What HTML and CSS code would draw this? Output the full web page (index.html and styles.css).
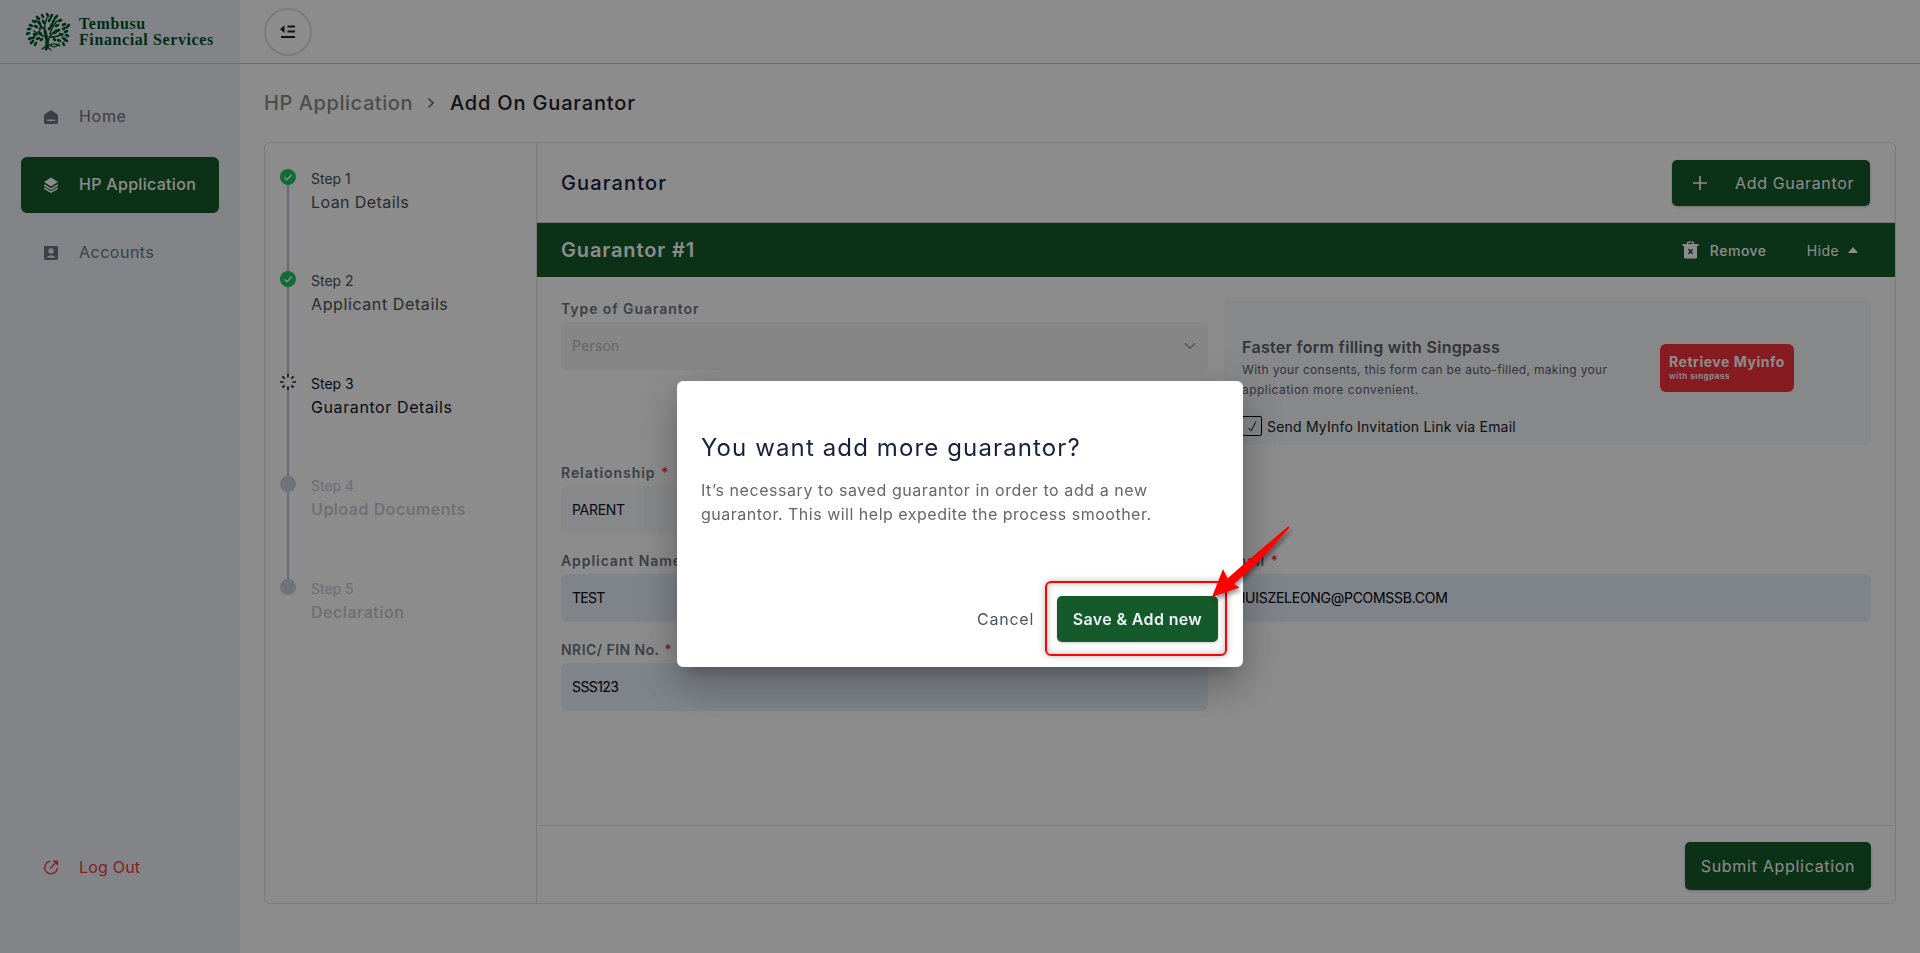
FILE: index.html
```html
<!DOCTYPE html>
<html lang="en">
<head>
<meta charset="utf-8">
<title>Add On Guarantor</title>
<link rel="stylesheet" href="styles.css">
</head>
<body>
<div class="app">
  <aside class="sidebar">
    <div class="brand">
      <svg class="brand-tree" viewBox="0 0 46 39" width="46" height="39">
        <g stroke="#00552a" fill="none" stroke-linecap="round">
          <path stroke-width="3" d="M21 37C23 31 22 26 20 19"/>
          <path stroke-width="1.500" d="M23 36C22 28 24 24 31 18M21 25C17 23 12 22 9 19M20 20C19 14 20 10 22 6M24 25C29 25 33 25 38 22M20 18C16 14 13 11 11 8M25 22C27 15 29 12 32 9"/>
          <path stroke-width="1.200" d="M17 37l4-3 5 4M24 34c4-3 7-3 11 0M23 31c4 5 7 5 11 1"/>
        </g>
        <g fill="none" stroke="#00552a" stroke-width="2.600" stroke-linecap="round">
          <path d="M22 2l1 2M17 3l1 2M27 3l-1 2M12 5l2 2M32 4l-2 2M36 8l-2 1M8 9l2 1M5 13l2 1M3 17h2M2 22l2-1M4 27l2-1M6 31l2-2M10 33l1-2M40 12l-2 1M44 13l-2 2M38 17l2-1M42 19l-2 1M43 24l-2-1M38 26l2 1M42 29l-2-1M39 33l-1-2M10 14l2 1M14 10l1 2M18 9l1 2M24 9l1-2M29 8l-1 2M33 13l-2 1M26 14l1-2M15 17l1-2M9 22l2 1M12 27l2-1M8 26l1-1M32 19l2-1M35 22l2 1M29 21l2-1M33 28l2 1M16 22l-2-2M24 17l1-1M16 28l1-1M29 27l1 1"/>
        </g>
      </svg>
      <div class="brand-name"><span class="b1">Tembusu</span><span class="b2">Financial Services</span></div>
    </div>
    <nav class="nav">
      <a class="nav-item"><svg width="16" height="16" viewBox="0 0 16 16"><path fill="currentColor" fill-rule="evenodd" d="M8 1l6.200 4.300q.8.6.8 1.500V14q0 1-1 1H2q-1 0-1-1V6.800q0-.9.8-1.500zM4 10.500h8v1.500H4z"/></svg><span class="t-home">Home</span></a>
      <a class="nav-item active"><svg width="16" height="16" viewBox="0 0 16 16"><path fill="currentColor" d="M8 .5l7 4.500-7 4.500L1 5z"/><path fill="none" stroke="currentColor" stroke-width="1.500" d="M1.200 8L8 12.200 14.800 8M1.200 11L8 15.200 14.800 11"/></svg><span class="t-hp">HP Application</span></a>
      <a class="nav-item"><svg width="16" height="16" viewBox="0 0 16 16"><path fill="currentColor" fill-rule="evenodd" d="M2.200 1h11.600Q15 1 15 2.200v11.600q0 1.200-1.200 1.200H2.200Q1 15 1 13.800V2.200Q1 1 2.200 1zM8 3.300a2.700 2.700 0 1 0 0 5.400 2.700 2.700 0 0 0 0-5.400zM3.500 12.800h9Q11 10.200 8 10.200T3.500 12.800z"/></svg><span class="t-acc">Accounts</span></a>
    </nav>
    <a class="nav-item logout"><svg width="17" height="17" viewBox="0 0 17 17"><path fill="none" stroke="currentColor" stroke-width="1.500" d="M8 1.800A6.700 6.700 0 1 0 15.200 9M7.500 9.500L13 4"/><path fill="currentColor" d="M10 1h6v6z"/></svg><span class="t-out">Log Out</span></a>
  </aside>

  <div class="page">
    <header class="topbar">
      <button class="toggle"><svg width="16" height="14" viewBox="0 0 16 14"><path fill="#222" d="M0 4.200L4.500.5v7.400z"/><path stroke="#222" stroke-width="1.800" d="M7.500 1.500H15M7.500 6.500H15M1 12h14"/></svg></button>
    </header>
    <main class="main">
      <h1 class="crumbs"><span class="crumb-parent">HP Application</span><svg width="8" height="12" viewBox="0 0 8 12"><path d="M1.500 1.500L6 6l-4.500 4.500" fill="none" stroke="#6e6e6e" stroke-width="1.700"/></svg><span class="crumb-current">Add On Guarantor</span></h1>

      <section class="card">
        <ol class="steps">
          <li class="step done"><i class="marker"><svg width="16" height="16" viewBox="0 0 16 16"><circle cx="8" cy="8" r="8" fill="#22c55e"/><path d="M4.300 8.200l2.600 2.500 4.900-5" fill="none" stroke="#fff" stroke-width="1.500"/></svg></i><div><small>Step 1</small><b class="l1">Loan Details</b></div></li>
          <li class="step done"><i class="marker"><svg width="16" height="16" viewBox="0 0 16 16"><circle cx="8" cy="8" r="8" fill="#22c55e"/><path d="M4.300 8.200l2.600 2.500 4.900-5" fill="none" stroke="#fff" stroke-width="1.500"/></svg></i><div><small>Step 2</small><b>Applicant Details</b></div></li>
          <li class="step current"><i class="marker"><svg width="16" height="16" viewBox="0 0 16 16"><path stroke="#16213c" stroke-width="1.700" d="M8 0v3.500M8 12.500V16M0 8h3.500M12.500 8H16M2.400 2.400l2.300 2.300M11.300 11.300l2.300 2.300M2.400 13.600l2.300-2.300M11.300 4.700l2.300-2.300"/></svg></i><div><small>Step 3</small><b>Guarantor Details</b></div></li>
          <li class="step todo"><i class="marker"></i><div><small>Step 4</small><b>Upload Documents</b></div></li>
          <li class="step todo"><i class="marker"></i><div><small>Step 5</small><b>Declaration</b></div></li>
        </ol>

        <div class="panel">
          <div class="panel-head"><h2>Guarantor</h2><button class="btn add"><svg width="14" height="14" viewBox="0 0 14 14"><path d="M7 0v14M0 7h14" stroke="#fff" stroke-width="1.700"/></svg><span>Add Guarantor</span></button></div>
          <div class="bar">
            <h3>Guarantor #1</h3>
            <span class="remove"><svg width="17" height="18" viewBox="0 0 17 18"><path fill="#fff" fill-rule="evenodd" d="M5 1.500Q5 .5 6 .5h5q1 0 1 1V3h4.500v2H15v11.500q0 1-1 1H3q-1 0-1-1V5H.5V3H5zM6.300 1.800V3h4.400V1.800zM5.700 8l1.700 2.500L5.700 13h1.800l1-1.500 1 1.500h1.800l-1.700-2.500L11.300 8H9.500l-1 1.500-1-1.500z"/></svg><span>Remove</span></span>
            <span class="hide"><span>Hide</span><svg width="10" height="6" viewBox="0 0 10 6"><path fill="#fff" d="M5 0l5 6H0z"/></svg></span>
          </div>

          <div class="form">
            <div class="field type"><label>Type of Guarantor</label><div class="input disabled"><span>Person</span><svg width="12" height="8" viewBox="0 0 12 8"><path d="M1 1.200l5 5 5-5" fill="none" stroke="#999" stroke-width="1.600"/></svg></div></div>
            <div class="singpass">
              <div class="sp-text">
                <h4>Faster form filling with Singpass</h4>
                <p><span class="p1">With your consents, this form can be auto-filled, making your</span><br><span class="p2">application more convenient.</span></p>
                <div class="check"><i class="box"><svg width="11" height="12" viewBox="0 0 11 12"><path d="M1.500 8l2.500 3L9 1.500" fill="none" stroke="#111" stroke-width="1"/></svg></i><span>Send MyInfo Invitation Link via Email</span></div>
              </div>
              <button class="myinfo"><b>Retrieve Myinfo</b><small>with <em>sıngpass</em></small></button>
            </div>
            <div class="field rel"><label>Relationship <em>*</em></label><div class="input"><span class="v-parent">PARENT</span></div></div>
            <div class="field name"><label>Applicant Name <em>*</em></label><div class="input filled"><span class="v-test">TEST</span></div></div>
            <div class="field email"><label>Email <em>*</em></label><div class="input filled"><span class="v-mail">HUISZELEONG@PCOMSSB.COM</span></div></div>
            <div class="field nric"><label>NRIC/ FIN No. <em>*</em></label><div class="input filled"><span class="v-nric">SSS123</span></div></div>
          </div>
          <div class="panel-foot"><button class="btn submit"><span>Submit Application</span></button></div>
        </div>
      </section>
    </main>
  </div>
</div>

<div class="overlay">
  <div class="modal">
    <h2>You want add more guarantor?</h2>
    <p><span class="m1">It’s necessary to saved guarantor in order to add a new</span><br><span class="m2">guarantor. This will help expedite the process smoother.</span></p>
    <div class="actions"><button class="cancel"><span>Cancel</span></button><button class="btn save"><span>Save &amp; Add new</span></button></div>
    <div class="highlight"></div>
    <svg class="arrow" width="90" height="80" viewBox="0 0 90 80"><path fill="#f00" d="M2 73L13 45l4.500 9.500Q42 33 78 2.500q2-.8 1 1.500Q52 36 24 60l5.500 3.500z"/></svg>
  </div>
</div>
</body>
</html>
```
FILE: styles.css
```css
* { box-sizing: border-box; }
body { margin: 0; font-family: Inter, "Open Sans", sans-serif; font-size: 16px; color: #16213c; background: #fff; overflow: hidden; }
h1, h2, h3, h4, p, ol { margin: 0; padding: 0; }
button { border: 0; font-family: inherit; padding: 0; }
svg { display: block; flex: none; }
span, b, small, label, h1, h2, h3, h4 { white-space: nowrap; }

.app { display: flex; height: 953px; }
.sidebar { width: 240px; background: #eef0f6; display: flex; flex-direction: column; padding-bottom: 58px; }
.brand { height: 64px; border-bottom: 1px solid #bfc3d9; display: flex; align-items: center; gap: 8px; padding-left: 25px; }
.brand-name { display: flex; flex-direction: column; font: 700 16px/16px "Liberation Serif", serif; letter-spacing: .6px; color: #00552a; }
.nav { display: flex; flex-direction: column; gap: 12px; padding: 25px 21px 0; }
.nav-item { display: flex; align-items: center; gap: 20px; height: 56px; padding-left: 22px; border-radius: 6px; color: #6b7684; line-height: 24px; }
.nav-item svg { width: 16px; }
.nav-item span { padding-bottom: 2px; }
.nav-item.active { background: #145a2a; color: #fff; font-weight: 500; }
.t-home { letter-spacing: .7px; }
.t-hp { letter-spacing: .3px; }
.t-acc { letter-spacing: .5px; }
.t-out { letter-spacing: .2px; }
.logout { margin: auto 21px 0; color: #f03c46; }
.nav-item.logout span { padding-bottom: 0; }

.page { flex: 1; display: flex; flex-direction: column; }
.topbar { height: 64px; border-bottom: 1px solid #bfc3d9; padding: 8px 24px; }
.toggle { width: 48px; height: 48px; border-radius: 50%; border: 2px solid #e0e0e0; background: none; display: grid; place-items: center; }
.main { padding: 24px 24px 49px; flex: 1; display: flex; flex-direction: column; }
.crumbs { display: flex; align-items: center; height: 30px; margin-bottom: 24px; font-size: 20px; font-weight: 500; color: #222; }
.crumb-parent { color: #8c8c8c; width: 148px; letter-spacing: .57px; }
.crumb-current { letter-spacing: .82px; }
.crumbs svg { margin: 0 15px; }
.card { flex: 1; display: flex; border: 1px solid #e0e0e0; border-radius: 6px; overflow: hidden; }

.steps { width: 272px; border-right: 1px solid #e0e0e0; list-style: none; padding: 26px 0 0 15px; }
.step { position: relative; display: flex; gap: 15px; height: 102.400px; color: #4b4f5c; }
.step small, .step b { display: block; font-weight: 400; }
.step small { font-size: 14px; line-height: 20px; }
.step b { font-size: 16px; line-height: 24px; padding-top: 1px; letter-spacing: .6px; }
.step .l1 { letter-spacing: .42px; }
.step > div { display: flex; flex-direction: column; align-items: flex-start; }
.marker { width: 16px; height: 16px; border-radius: 50%; }
.step:not(:last-child)::after { content: ""; position: absolute; left: 7px; top: 16px; bottom: 0; width: 2px; background: #bfc0d4; }
.current { color: #0f172a; }
.todo { color: #c3c8d4; }
.todo b { font-weight: 500; letter-spacing: .55px; }
.todo .marker { background: #cbd2e0; }

.panel { flex: 1; display: flex; flex-direction: column; }
.panel-head { display: flex; justify-content: space-between; align-items: center; height: 80px; border-bottom: 1px solid #e0e0e0; padding: 0 25px 0 24px; }
.panel-head h2 { font-size: 20px; font-weight: 500; letter-spacing: 1.15px; }
.btn { background: #145a2a; color: #fff; border-radius: 5px; font-size: 16px; display: flex; align-items: center; box-shadow: 0 1px 3px #0003; }
.add { width: 198px; height: 46px; padding-left: 21px; gap: 28px; margin-top: 1px; letter-spacing: .65px; }
.bar { height: 54px; background: #145a2a; color: #fff; display: flex; align-items: center; padding: 0 37px 0 24px; }
.bar h3 { font-size: 20px; font-weight: 600; flex: 1; letter-spacing: .87px; }
.remove, .hide { display: flex; align-items: center; font-size: 14px; }
.remove { gap: 11px; width: 125px; font-weight: 500; letter-spacing: .5px; }
.hide { gap: 9px; letter-spacing: .4px; }

.form { flex: 1; display: grid; grid-template-columns: 647px 647px; grid-template-rows: 164px 88px 89px 89px; column-gap: 16px; padding: 20px 24px 0; align-content: start; }
.field label { display: block; font-size: 14px; line-height: 21px; height: 25px; padding-top: 1px; font-weight: 600; letter-spacing: .93px; color: #6b7684; }
.nric label { letter-spacing: .45px; }
.field label em { font-style: normal; color: #f03c46; letter-spacing: 0; margin-left: 1px; }
.name { grid-column: 1; }
.rel { grid-column: 1 / 3; width: 647px; }
.input { height: 48px; border-radius: 6px; background: #f6f8fb; display: flex; align-items: center; justify-content: space-between; padding: 0 12px 0 11px; font-size: 14px; color: #0f172a; }
.input span { padding-bottom: 2px; }
.input.filled { background: #e8f0fe; color: #000; }
.input.disabled { background: #f5f5f5; color: #b8b8b8; letter-spacing: .2px; }
.v-parent { letter-spacing: -.3px; }
.v-test { letter-spacing: -.75px; }
.v-mail { letter-spacing: -.28px; }
.v-nric { letter-spacing: -.6px; }
.singpass { height: 148px; background: #f6f8fb; border-radius: 6px; display: flex; padding: 38px 77px 0 18px; justify-content: space-between; }
.sp-text h4 { font-size: 16px; line-height: 24px; font-weight: 600; letter-spacing: .3px; color: #5b6070; }
.sp-text p { font-size: 12px; line-height: 20px; color: #5b6070; margin-top: 1px; }
.p1 { letter-spacing: .31px; }
.p2 { letter-spacing: .46px; }
.check { display: flex; align-items: center; gap: 5px; margin-top: 16px; font-size: 14px; letter-spacing: .2px; color: #222; }
.box { width: 20px; height: 20px; border: 1px solid #000; border-radius: 2px; display: grid; place-items: center; }
.myinfo { width: 134px; height: 48px; margin-top: 9px; border-radius: 6px; background: #f4333d; color: #fff; display: flex; flex-direction: column; align-items: flex-start; padding: 9px 0 0 9px; }
.myinfo b { font-size: 14px; line-height: 18px; letter-spacing: .53px; }
.myinfo small { font-size: 8px; line-height: 10px; font-weight: 600; letter-spacing: .55px; }
.myinfo em { font-style: normal; font-weight: 700; }
.panel-foot { height: 78px; border-top: 1px solid #e0e0e0; padding: 16px 24px 0; display: flex; justify-content: flex-end; }
.submit { width: 186px; height: 48px; justify-content: center; letter-spacing: .7px; padding-bottom: 1px; }

.overlay { position: fixed; inset: 0; background: rgba(0, 0, 0, .45); }
.modal { position: absolute; left: 677px; top: 381px; width: 566px; height: 286px; background: #fff; border-radius: 6px; padding: 49px 24px 25px; box-shadow: 0 11px 15px -7px rgba(0,0,0,.2), 0 24px 38px 3px rgba(0,0,0,.14), 0 9px 46px 8px rgba(0,0,0,.12); }
.modal h2 { font-size: 24px; line-height: 36px; font-weight: 400; letter-spacing: 1.12px; color: #16213c; }
.modal p { line-height: 24px; color: #666; margin-top: 12px; }
.m1 { letter-spacing: .57px; }
.m2 { letter-spacing: .5px; }
.actions { display: flex; justify-content: flex-end; align-items: center; gap: 23px; margin: 70px 1px 0 0; }
.cancel { background: none; font-size: 16px; letter-spacing: .75px; color: #4b5563; }
.save { width: 161px; height: 46px; justify-content: center; font-weight: 600; letter-spacing: .35px; color: #eef2f6; }
.highlight { position: absolute; left: 368px; top: 200px; width: 182px; height: 75px; border: 2px solid #f00; border-radius: 6px; box-shadow: 0 0 7px #0004, inset 0 0 7px #0004; }
.arrow { position: absolute; left: 533px; top: 143px; filter: drop-shadow(2px 3px 2px #0006); }
```
